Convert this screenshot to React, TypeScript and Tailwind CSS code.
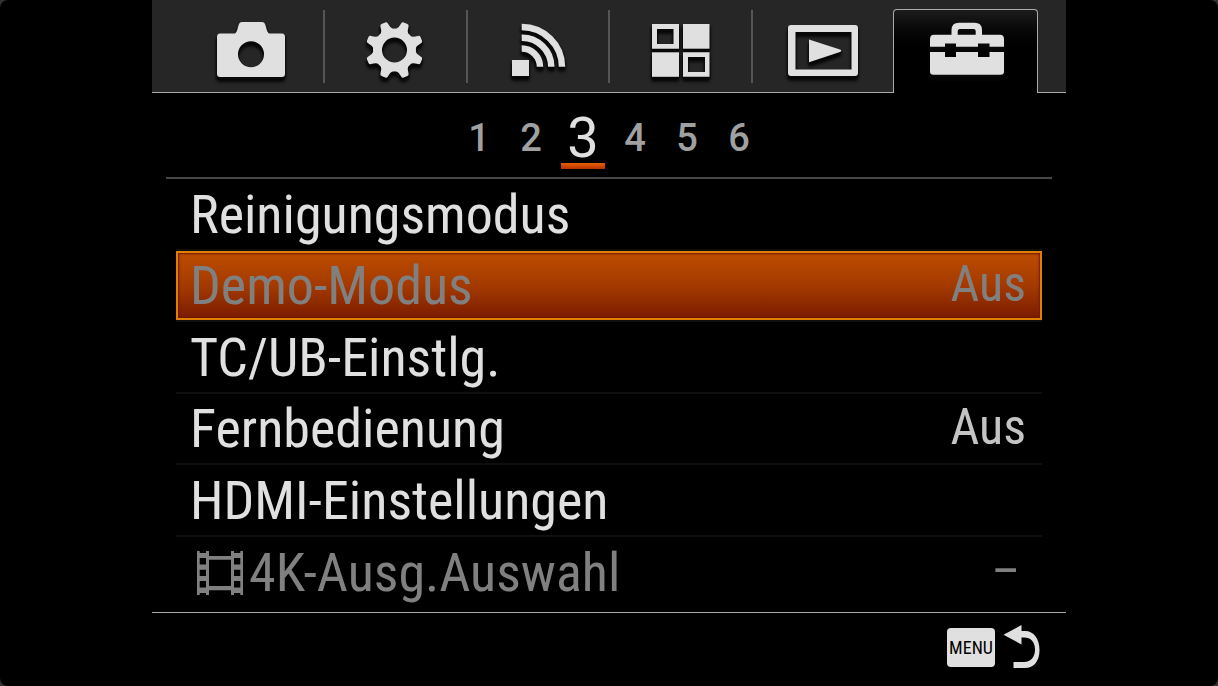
import React, { useState } from 'react';
import clsx from 'clsx';

interface MenuItem {
  label: string;
  value?: string;
  disabled?: boolean;
  movie?: boolean;
}

const PAGES = [1, 2, 3, 4, 5, 6];

const ITEMS: MenuItem[] = [
  { label: 'Reinigungsmodus' },
  { label: 'Demo-Modus', value: 'Aus', disabled: true },
  { label: 'TC/UB-Einstlg.' },
  { label: 'Fernbedienung', value: 'Aus' },
  { label: 'HDMI-Einstellungen' },
  { label: '4K-Ausg.Auswahl', value: '–', disabled: true, movie: true },
];

const CameraIcon = () => (
  <path
    fillRule="evenodd"
    d="M9 13.5H24Q26 12 27 7L28 4Q28.6 2 31 2H51Q53.4 2 54 4L55 7Q56 12 58 13.5H71Q74 13.5 74 17V54Q74 57 71 57H9Q6 57 6 54V17Q6 13.5 9 13.5ZM40 21.3A13 13 0 1 0 40 47.3A13 13 0 1 0 40 21.3Z"
  />
);

const GearIcon = () => (
  <g transform="translate(40.5 30)">
    <circle r="17" fill="none" stroke="currentColor" strokeWidth="9" />
    {[22.5, 67.5, 112.5, 157.5, 202.5, 247.5, 292.5, 337.5].map((angle) => (
      <path key={angle} transform={`rotate(${angle})`} d="M-7 -19.5Q-4.4 -22 -4 -27Q-3.8 -28.8 -2 -29H2Q3.8 -28.8 4 -27Q4.4 -22 7 -19.5Z" />
    ))}
  </g>
);

const WirelessIcon = () => (
  <g>
    <rect x="15" y="40" width="17" height="16" />
    <g fill="none" stroke="currentColor" strokeWidth="6.5">
      <path d="M24.7 7A40.3 40 0 0 1 65 46.7" />
      <path d="M24.7 17.7A29.3 29.3 0 0 1 54.3 46.7" />
      <path d="M24.7 28.5A18.3 18.3 0 0 1 43 46.7" />
    </g>
  </g>
);

const ApplicationIcon = () => (
  <g>
    <path fillRule="evenodd" d="M12 4H39V28.7H12ZM17 9V24H33.5V9Z" />
    <rect x="43" y="4" width="26.5" height="24.7" />
    <rect x="12" y="32.3" width="27" height="24.5" />
    <path fillRule="evenodd" d="M43 32.3H69.5V56.8H43ZM48 37V52H65V37Z" />
  </g>
);

const PlaybackIcon = () => (
  <g>
    <path fillRule="evenodd" d="M8 5H72Q75 5 75 8V53Q75 56 72 56H8Q5 56 5 53V8Q5 5 8 5ZM12.5 12V49.5H68.5V12Z" />
    <path d="M26 19.5L57 29.5Q59.5 30.7 57 32L26 42.3Z" />
  </g>
);

const ToolboxIcon = () => (
  <g>
    <path
      fillRule="evenodd"
      d="M4 26.7V19Q4 14.7 8 14.7H25.5V10Q25.5 2.7 33 2.7H48.5Q56 2.7 56 10V14.7H74Q78 14.7 78 19V26.7H63.5V23.5H52V26.7H30V23.5H19V26.7ZM31.7 14.7H49.7V11Q49.7 9 47.5 9H34Q31.7 9 31.7 11Z"
    />
    <path d="M4 32H19V37H30V32H52V37H63.5V32H78V51.5Q78 54.7 74.5 54.7H7.5Q4 54.7 4 51.5Z" />
  </g>
);

const TABS = [
  { name: 'Kamera', Icon: CameraIcon },
  { name: 'Benutzer', Icon: GearIcon },
  { name: 'Drahtlos', Icon: WirelessIcon },
  { name: 'Applikation', Icon: ApplicationIcon },
  { name: 'Wiedergabe', Icon: PlaybackIcon },
  { name: 'Setup', Icon: ToolboxIcon },
];

const MovieIcon = () => (
  <svg viewBox="0 0 46 44" className="h-11 w-[46px]" fill="currentColor" aria-hidden="true">
    <path
      fillRule="evenodd"
      d="M0 0H2.7V2H9V0H12V5H34V0H37V2H43.3V0H46V44H43.3V42H37V44H34V39.3H12V44H9V42H2.7V44H0ZM12 8.7V35H34V8.7ZM2.7 7V13.5H9V7ZM2.7 18.7V25H9V18.7ZM2.7 30V36.5H9V30ZM37 7V13.5H43.3V7ZM37 18.7V25H43.3V18.7ZM37 30V36.5H43.3V30Z"
    />
  </svg>
);

const ReturnIcon = () => (
  <svg viewBox="0 0 37 44" className="h-11 w-[37px]" fill="currentColor" aria-hidden="true">
    <path d="M18.5 6H22C31 6 36.5 14 36.5 25C36.5 36 31 43 22 43H10.5V37H21C28 37 32 32 32 24.5C32 17 28 12.5 21 12.5H18.5V19.5L0.5 9.7L18.5 0Z" />
  </svg>
);

export default function App() {
  const [tab, setTab] = useState(5);
  const [page, setPage] = useState(3);
  const [selected, setSelected] = useState(1);

  return (
    <div className="min-h-screen bg-[#333]">
      <main className="flex min-h-screen flex-col rounded-lg bg-black px-[152px] font-['Roboto_Condensed','Liberation_Sans',sans-serif] text-[#e0e0e0]">
        {/* Category tabs */}
        <div role="tablist" className="flex h-[93px] bg-[#262626]">
          <div className="w-7 border-b border-[#aaa]" />
          {TABS.map(({ name, Icon }, index) => (
            <button
              key={name}
              role="tab"
              aria-label={name}
              aria-selected={index === tab}
              onClick={() => setTab(index)}
              className={clsx(
                'flex flex-1 border-[#aaa]',
                index === tab ? 'mt-[9px] -ml-px rounded-t border-x border-t bg-linear-to-b from-[#1c1c1c] to-black to-60%' : 'border-b pt-[10px]'
              )}
            >
              <span
                className={clsx(
                  'flex h-[73px] flex-1 justify-center border-x-2 border-r-transparent pt-[10px]',
                  index === 0 || index === tab || index === tab + 1 ? 'border-l-transparent' : 'border-l-[#555]'
                )}
              >
                <svg
                  viewBox="0 0 80 60"
                  className="h-[60px] w-20 overflow-visible [filter:drop-shadow(-1px_3px_1px_#080808)_drop-shadow(1px_2px_1px_#080808)]"
                  fill="currentColor"
                  aria-hidden="true"
                >
                  <Icon />
                </svg>
              </span>
            </button>
          ))}
          <div className="w-7 border-b border-[#aaa]" />
        </div>

        {/* Page numbers */}
        <nav className="mx-[14px] flex justify-center border-b-2 border-[#484848] pt-[13px] pb-2 font-[Roboto,sans-serif]">
          {PAGES.map((n) => (
            <button
              key={n}
              onClick={() => setPage(n)}
              className={clsx(
                'relative h-[63px] w-[52px] leading-none',
                n === page ? 'text-[56px]' : 'text-[38px] font-medium text-[#a0a0a0]'
              )}
            >
              {n}
              {n === page && <span className="absolute inset-x-1 bottom-0 h-[6px] bg-linear-to-b from-[#e86000] to-[#b83000]" />}
            </button>
          ))}
        </nav>

        {/* Settings */}
        <ul className="grid flex-1 grid-rows-6 px-6 pb-1">
          {ITEMS.map((item, index) => (
            <li key={item.label} className={clsx('flex', index < ITEMS.length - 1 && 'border-b-2 border-[#0f0f0f]')}>
              <button
                onClick={() => setSelected(index)}
                aria-disabled={item.disabled}
                className={clsx(
                  'flex flex-1 items-center justify-between border-2 pt-[2px] pr-[14px] pl-3 text-left whitespace-nowrap',
                  index === selected
                    ? 'border-[#e08000] bg-linear-to-b from-[#bc4c00] via-[#a43a00] to-[#7c1c00] shadow-[inset_0_0_2px_1px_#701800]'
                    : 'border-transparent',
                  item.disabled && 'text-[#808080]'
                )}
              >
                <span className={clsx('flex items-center text-[54px] leading-[60px]', item.movie && 'gap-[6px] pl-[7px]')}>
                  {item.movie && <MovieIcon />}
                  {item.label}
                </span>
                {item.value && (
                  <span className={clsx('pb-1 text-[50px] leading-[56px]', item.value === '–' && 'pr-[6px]', !item.disabled && 'text-[#c4c4c4]')}>
                    {item.value}
                  </span>
                )}
              </button>
            </li>
          ))}
        </ul>

        {/* Footer */}
        <footer className="flex h-[74px] items-center justify-end border-t border-[#aaa] pr-[26px] pb-[5px]">
          <button className="flex items-center gap-2">
            <span className="flex h-[39px] w-12 items-center justify-center rounded-sm bg-[#e0e0e0] text-[18px] text-black">MENU</span>
            <ReturnIcon />
          </button>
        </footer>
      </main>
    </div>
  );
}
